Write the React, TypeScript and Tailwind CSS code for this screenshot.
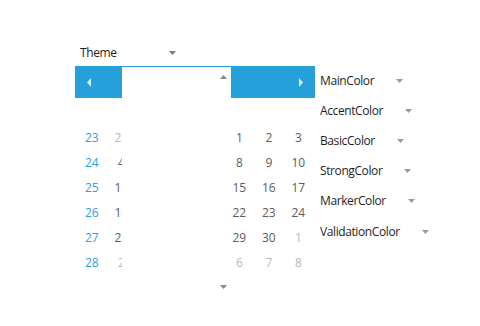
const font = { fontFamily: '"Open Sans", "Liberation Sans", sans-serif' };

const colorNames = ['MainColor', 'AccentColor', 'BasicColor', 'StrongColor', 'MarkerColor', 'ValidationColor'];

type Day = { n: number; muted?: boolean };

const weeks: { wk: number; days: Day[] }[] = [
  { wk: 23, days: [{ n: 28, muted: true }, { n: 29, muted: true }, { n: 30, muted: true }, { n: 31, muted: true }, { n: 1 }, { n: 2 }, { n: 3 }] },
  { wk: 24, days: [{ n: 4 }, { n: 5 }, { n: 6 }, { n: 7 }, { n: 8 }, { n: 9 }, { n: 10 }] },
  { wk: 25, days: [{ n: 11 }, { n: 12 }, { n: 13 }, { n: 14 }, { n: 15 }, { n: 16 }, { n: 17 }] },
  { wk: 26, days: [{ n: 18 }, { n: 19 }, { n: 20 }, { n: 21 }, { n: 22 }, { n: 23 }, { n: 24 }] },
  { wk: 27, days: [{ n: 25 }, { n: 26 }, { n: 27 }, { n: 28 }, { n: 29 }, { n: 30 }, { n: 1, muted: true }] },
  { wk: 28, days: [{ n: 2, muted: true }, { n: 3, muted: true }, { n: 4, muted: true }, { n: 5, muted: true }, { n: 6, muted: true }, { n: 7, muted: true }, { n: 8, muted: true }] },
];

function Caret({ up = false, color = '#8a8a8a' }: { up?: boolean; color?: string }) {
  return (
    <svg width="7" height="4" viewBox="0 0 7 4" className="block">
      <path d={up ? 'M0 4 L3.5 0 L7 4 Z' : 'M0 0 L7 0 L3.5 4 Z'} fill={color} />
    </svg>
  );
}

function Calendar() {
  return (
    <div className="relative w-[240px]">
      {/* header */}
      <div className="h-[32px] bg-[#26a0da] flex items-center justify-between px-[12px]">
        <svg width="4" height="9" viewBox="0 0 4 9" className="block">
          <path d="M4 0 L0 4.5 L4 9 Z" fill="#ffffff" fillOpacity="0.8" />
        </svg>
        <svg width="4" height="9" viewBox="0 0 4 9" className="block">
          <path d="M0 0 L4 4.5 L0 9 Z" fill="#ffffff" fillOpacity="0.8" />
        </svg>
      </div>

      {/* days */}
      <div className="pt-[27px] pl-[2px] grid grid-cols-[repeat(8,29.5px)] text-[12px] leading-[25px] tracking-[-0.2px]">
        {weeks.map((w) => (
          <div key={w.wk} className="contents">
            <div className="h-[25px] text-center text-[#2d9ee0]">{w.wk}</div>
            {w.days.map((d, i) => (
              <div key={i} className={`h-[25px] text-center ${d.muted ? 'text-[#b8b8b8]' : 'text-[#5c5c5c]'}`}>
                {d.n}
              </div>
            ))}
          </div>
        ))}
      </div>

      {/* scrolling selector popup over the grid */}
      <div className="absolute left-[47px] top-[1px] w-[109px] h-[228px] bg-white flex flex-col items-end justify-between pr-[4px] pt-[8px] pb-[6px]">
        <Caret up color="#8a8a8a" />
        <Caret color="#8a8a8a" />
      </div>
    </div>
  );
}

export default function App() {
  return (
    <div className="w-[480px] h-[326px] bg-white text-[12px] text-[#1e1e1e] overflow-hidden" style={font}>
      <div className="pt-[44px] pl-[80px] h-[66px] flex items-start">
        <div className="h-[17px] flex items-center">
          <span className="w-[89px] tracking-[-0.4px]">Theme</span>
          <Caret color="#7a7a7a" />
        </div>
      </div>
      <div className="flex pl-[75px]">
        <Calendar />
        <div className="pl-[5px] -mt-[0.5px] flex flex-col">
          {colorNames.map((c) => (
            <div key={c} className="h-[30.2px] flex items-center">
              <span className="tracking-[-0.4px]">{c}</span>
              <span className="ml-[22px]">
                <Caret color="#9a9a9a" />
              </span>
            </div>
          ))}
        </div>
      </div>
    </div>
  );
}
